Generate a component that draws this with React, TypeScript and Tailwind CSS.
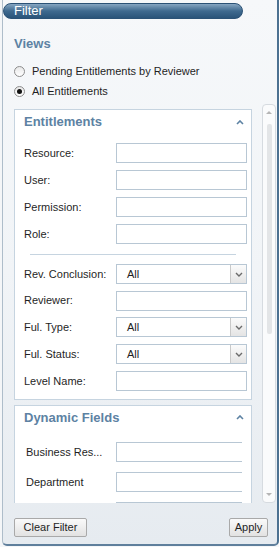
import React, { type FC, type ReactNode } from "react";

const ChevronDown: FC = () => (
  <svg width="8" height="5" viewBox="0 0 8 5" fill="none">
    <path d="M1 1l3 3 3-3" stroke="#6b6b6b" strokeWidth="1.4" />
  </svg>
);

const ChevronUp: FC = () => (
  <svg width="8" height="5" viewBox="0 0 8 5" fill="none">
    <path d="M1 4l3-3 3 3" stroke="#5d82a3" strokeWidth="1.6" />
  </svg>
);

interface RadioProps {
  label: string;
  checked?: boolean;
}

const Radio: FC<RadioProps> = ({ label, checked }) => (
  <div className="flex h-[16px] items-center">
    <span className="flex h-[11px] w-[11px] items-center justify-center rounded-full border border-[#8d8d8d] bg-gradient-to-b from-[#e8e8e8] to-white">
      {checked && <span className="h-[5px] w-[5px] rounded-full bg-[#111]" />}
    </span>
    <span className="ml-[7px] text-[11px] text-[#1f1f1f]">{label}</span>
  </div>
);

const TextBox: FC<{ open?: boolean }> = ({ open }) => (
  <div
    className={
      open
        ? "h-[20px] w-[126px] border border-r-0 border-[#b8c7d4] bg-white"
        : "h-[20px] w-[131px] border border-[#b8c7d4] bg-white"
    }
  />
);

const SelectBox: FC<{ value: string }> = ({ value }) => (
  <div className="flex h-[20px] w-[131px] items-stretch border border-[#b8c7d4] bg-white">
    <span className="flex-1 pl-[10px] text-[11px] leading-[18px] text-[#1f1f1f]">
      {value}
    </span>
    <span className="flex w-[16px] items-center justify-center border-l border-[#c9c9c9] bg-gradient-to-b from-[#fbfbfb] to-[#e4e4e4]">
      <ChevronDown />
    </span>
  </div>
);

interface FieldProps {
  label: string;
  children: ReactNode;
  wide?: boolean;
}

const Field: FC<FieldProps> = ({ label, children, wide }) => (
  <div className="flex items-center">
    <span
      className={
        wide
          ? "w-[101px] pl-[11px] text-[11px] text-[#1f1f1f]"
          : "w-[101px] pl-[9px] text-[11px] text-[#1f1f1f]"
      }
    >
      {label}
    </span>
    {children}
  </div>
);

const PanelHeading: FC<{ title: string }> = ({ title }) => (
  <div className="flex h-[16px] items-center justify-between pl-[9px] pr-[7px]">
    <span className="text-[13px] font-bold text-[#5d82a3]">{title}</span>
    <ChevronUp />
  </div>
);

export default function App() {
  return (
    <div className="h-[547px] w-[279px] overflow-hidden bg-[#f4f6f8] font-['Liberation_Sans',Arial,sans-serif]">
      <div className="ml-[2px] flex h-[546px] w-[277px] flex-col rounded-b-[5px] border-b-2 border-l border-r-2 border-b-[#5f7f9c] border-l-[#aebdca] border-r-[#4c7191] bg-gradient-to-b from-[#f6f8fa] via-[#f1f4f7] to-[#e6ebf0]">
        <div className="mt-[3px] h-[16px] w-[240px] rounded-full border border-[#2b5276] bg-gradient-to-b from-[#86a6c2] via-[#3f6a8f] to-[#2a5479] pl-[10px] text-[13px] leading-[14px] text-white">
          Filter
        </div>

        <div className="pl-[11px]">
          <div className="mt-[17px] text-[13px] font-bold leading-[16px] text-[#5d82a3]">
            Views
          </div>
          <div className="mt-[11px] flex flex-col gap-[4px]">
            <Radio label="Pending Entitlements by Reviewer" />
            <Radio label="All Entitlements" checked />
          </div>
        </div>

        <div className="mt-[5px] flex h-[399px]">
          <div className="ml-[11px] w-[238px] overflow-hidden pt-[5px]">
            <div className="border border-[#c6d4e0] bg-white pb-[8px] pt-[4px]">
              <PanelHeading title="Entitlements" />
              <div className="mt-[13px] flex flex-col gap-[7px]">
                <Field label="Resource:">
                  <TextBox />
                </Field>
                <Field label="User:">
                  <TextBox />
                </Field>
                <Field label="Permission:">
                  <TextBox />
                </Field>
                <Field label="Role:">
                  <TextBox />
                </Field>
              </div>
              <div className="mx-[15px] mt-[10px] border-t border-[#c6d4e0]" />
              <div className="mt-[9px] flex flex-col gap-[6.7px]">
                <Field label="Rev. Conclusion:">
                  <SelectBox value="All" />
                </Field>
                <Field label="Reviewer:">
                  <TextBox />
                </Field>
                <Field label="Ful. Type:">
                  <SelectBox value="All" />
                </Field>
                <Field label="Ful. Status:">
                  <SelectBox value="All" />
                </Field>
                <Field label="Level Name:">
                  <TextBox />
                </Field>
              </div>
            </div>

            <div className="mt-[5px] border border-[#c6d4e0] bg-white pb-[8px] pt-[4px]">
              <PanelHeading title="Dynamic Fields" />
              <div className="mt-[16px] flex flex-col gap-[10px]">
                <Field label="Business Res..." wide>
                  <TextBox open />
                </Field>
                <Field label="Department" wide>
                  <TextBox open />
                </Field>
                <Field label="" wide>
                  <TextBox open />
                </Field>
              </div>
            </div>
          </div>

          <div className="ml-[10px] flex h-[399px] w-[14px] flex-col items-center rounded-[4px] border border-[#d6dbe0] bg-[#fafbfc] py-[6px]">
            <span className="h-0 w-0 border-x-[3px] border-b-[3px] border-x-transparent border-b-[#b5b5b5]" />
            <span className="mt-[10px] h-[210px] w-[5px] rounded-[2px] bg-[#e3e5e7]" />
            <span className="flex-1" />
            <span className="h-0 w-0 border-x-[3px] border-t-[3px] border-x-transparent border-t-[#b5b5b5]" />
          </div>
        </div>

        <div className="mt-[15px] flex justify-between pl-[11px] pr-[9px]">
          <button className="h-[19px] w-[73px] rounded-[2px] border border-[#a9a9a9] bg-gradient-to-b from-[#fafafa] to-[#e2e2e2] text-[11px] text-[#1f1f1f]">
            Clear Filter
          </button>
          <button className="h-[19px] w-[39px] rounded-[2px] border border-[#a9a9a9] bg-gradient-to-b from-[#fafafa] to-[#e2e2e2] text-[11px] text-[#1f1f1f]">
            Apply
          </button>
        </div>
      </div>
    </div>
  );
}
